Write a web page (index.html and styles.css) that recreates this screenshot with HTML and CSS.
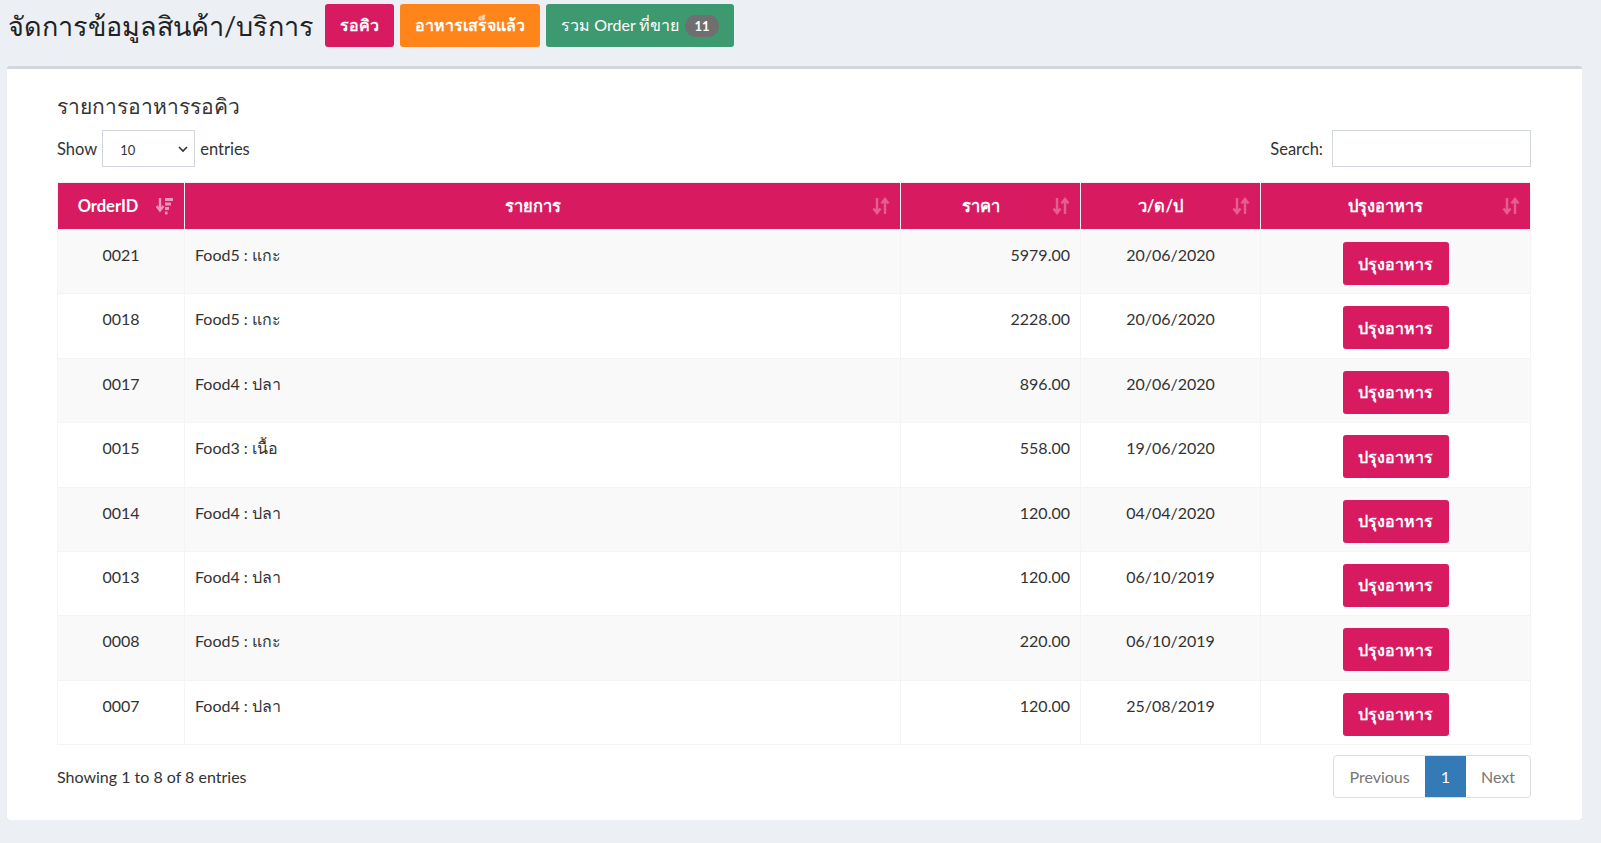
FILE: index.html
```html
<!DOCTYPE html>
<html lang="th">
<head>
<meta charset="utf-8">
<title>จัดการข้อมูลสินค้า/บริการ</title>
<link rel="stylesheet" href="styles.css">
</head>
<body>
<div class="top">
  <h1 class="page-title">จัดการข้อมูลสินค้า/บริการ</h1>
  <a class="btn btn-maroon">รอคิว</a>
  <a class="btn btn-orange">อาหารเสร็จแล้ว</a>
  <a class="btn btn-olive">รวม Order ที่ขาย <span class="badge">11</span></a>
</div>

<div class="card">
  <h3 class="card-title">รายการอาหารรอคิว</h3>
  <div class="controls">
    <label class="length">Show
      <span class="select">10
        <svg width="10" height="7" viewBox="0 0 10 7"><path d="M1 1l4 4 4-4" fill="none" stroke="#333" stroke-width="1.6"/></svg>
      </span>
      entries</label>
    <label class="search">Search: <span class="input"></span></label>
  </div>

  <table class="grid">
    <thead>
      <tr>
        <th class="c-id">OrderID
          <svg class="sort sort-on" width="18" height="18" viewBox="0 0 18 18"><path d="M4 1v11M0.5 9l3.5 4.5 3.5-4.5" fill="none" stroke="currentColor" stroke-width="2.4"/><rect x="9" y="1" width="8" height="3" fill="currentColor"/><rect x="9" y="5.5" width="6" height="3" fill="currentColor"/><rect x="9" y="10" width="4" height="3" fill="currentColor"/><rect x="9" y="14.5" width="2.5" height="3" fill="currentColor"/></svg>
        </th>
        <th class="c-name">รายการ<svg class="sort" width="18" height="18" viewBox="0 0 18 18"><path d="M5 1v14M1.5 11.5l3.5 4.5 3.5-4.5M13 17V3M9.5 6.5L13 2l3.5 4.5" fill="none" stroke="currentColor" stroke-width="2.4"/></svg></th>
        <th class="c-price">ราคา<svg class="sort" width="18" height="18" viewBox="0 0 18 18"><path d="M5 1v14M1.5 11.5l3.5 4.5 3.5-4.5M13 17V3M9.5 6.5L13 2l3.5 4.5" fill="none" stroke="currentColor" stroke-width="2.4"/></svg></th>
        <th class="c-date">ว/ด/ป<svg class="sort" width="18" height="18" viewBox="0 0 18 18"><path d="M5 1v14M1.5 11.5l3.5 4.5 3.5-4.5M13 17V3M9.5 6.5L13 2l3.5 4.5" fill="none" stroke="currentColor" stroke-width="2.4"/></svg></th>
        <th class="c-act">ปรุงอาหาร<svg class="sort" width="18" height="18" viewBox="0 0 18 18"><path d="M5 1v14M1.5 11.5l3.5 4.5 3.5-4.5M13 17V3M9.5 6.5L13 2l3.5 4.5" fill="none" stroke="currentColor" stroke-width="2.4"/></svg></th>
      </tr>
    </thead>
    <tbody>
      <tr><td class="c-id">0021</td><td>Food5 : แกะ</td><td class="c-price">5979.00</td><td class="c-date">20/06/2020</td><td class="c-act"><a class="btn btn-maroon btn-cook">ปรุงอาหาร</a></td></tr>
      <tr><td class="c-id">0018</td><td>Food5 : แกะ</td><td class="c-price">2228.00</td><td class="c-date">20/06/2020</td><td class="c-act"><a class="btn btn-maroon btn-cook">ปรุงอาหาร</a></td></tr>
      <tr><td class="c-id">0017</td><td>Food4 : ปลา</td><td class="c-price">896.00</td><td class="c-date">20/06/2020</td><td class="c-act"><a class="btn btn-maroon btn-cook">ปรุงอาหาร</a></td></tr>
      <tr><td class="c-id">0015</td><td>Food3 : เนื้อ</td><td class="c-price">558.00</td><td class="c-date">19/06/2020</td><td class="c-act"><a class="btn btn-maroon btn-cook">ปรุงอาหาร</a></td></tr>
      <tr><td class="c-id">0014</td><td>Food4 : ปลา</td><td class="c-price">120.00</td><td class="c-date">04/04/2020</td><td class="c-act"><a class="btn btn-maroon btn-cook">ปรุงอาหาร</a></td></tr>
      <tr><td class="c-id">0013</td><td>Food4 : ปลา</td><td class="c-price">120.00</td><td class="c-date">06/10/2019</td><td class="c-act"><a class="btn btn-maroon btn-cook">ปรุงอาหาร</a></td></tr>
      <tr><td class="c-id">0008</td><td>Food5 : แกะ</td><td class="c-price">220.00</td><td class="c-date">06/10/2019</td><td class="c-act"><a class="btn btn-maroon btn-cook">ปรุงอาหาร</a></td></tr>
      <tr><td class="c-id">0007</td><td>Food4 : ปลา</td><td class="c-price">120.00</td><td class="c-date">25/08/2019</td><td class="c-act"><a class="btn btn-maroon btn-cook">ปรุงอาหาร</a></td></tr>
    </tbody>
  </table>

  <div class="footer">
    <div class="info">Showing 1 to 8 of 8 entries</div>
    <div class="pager">
      <a class="pg pg-prev">Previous</a>
      <a class="pg pg-cur">1</a>
      <a class="pg pg-next">Next</a>
    </div>
  </div>
</div>
</body>
</html>
```

FILE: styles.css
```css
* { box-sizing: border-box; }
body {
  margin: 0;
  background: #ecf0f5;
  font-family: "Lato", "Noto Sans", sans-serif;
  color: #333;
  font-size: 16px;
}
.top {
  display: flex;
  align-items: center;
  gap: 6px;
  padding: 4px 8px 0 8px;
  height: 47px;
}
.page-title {
  margin: 0 5px 0 0;
  font-size: 27px;
  font-weight: 400;
  color: #222;
  line-height: 43px;
}
.btn {
  display: inline-flex;
  align-items: center;
  justify-content: center;
  height: 43px;
  padding: 0 15px;
  border-radius: 3px;
  color: #fff;
  font-weight: 700;
  font-size: 16px;
  text-decoration: none;
}
.btn-maroon { background: #d81b60; }
.btn-orange { background: #ff851b; }
.btn-olive { background: #3d9970; font-weight: 400; }
.badge {
  display: inline-block;
  margin-left: 6px;
  background: #6f6f6f;
  color: #fff;
  border-radius: 11px;
  font-size: 13px;
  font-weight: 700;
  padding: 4px 9px;
  line-height: 14px;
}
.card {
  margin: 19px 19px 0 7px;
  background: #fff;
  border-top: 3px solid #d2d6de;
  border-radius: 3px;
  box-shadow: 0 1px 1px rgba(0,0,0,0.1);
  padding: 22px 51px 22px 50px;
}
.card-title {
  margin: 0;
  font-size: 21px;
  font-weight: 400;
  line-height: 30px;
  color: #333;
}
.controls {
  display: flex;
  justify-content: space-between;
  align-items: center;
  margin-top: 9px;
}
.length, .search {
  display: flex;
  align-items: center;
  gap: 5px;
  font-size: 16.5px;
}
.select {
  display: inline-flex;
  align-items: center;
  justify-content: space-between;
  width: 93px;
  height: 37px;
  border: 1px solid #d2d6de;
  padding: 2px 6px 0 17px;
  font-size: 13px;
}
.input {
  display: inline-block;
  width: 199px;
  height: 37px;
  border: 1px solid #d2d6de;
  margin-left: 4px;
}
.grid {
  width: 100%;
  margin-top: 15px;
  border-collapse: collapse;
  border: 1px solid #f4f4f4;
}
.grid th {
  position: relative;
  background: #d81b60;
  color: #fff;
  font-weight: 700;
  height: 47px;
  padding: 0 30px 0 10px;
  border-left: 1px solid #f4f4f4;
  font-size: 16.5px;
  text-align: center;
}
.grid th:first-child { border-left: none; }
.grid th.c-id { padding-left: 4px; }
.sort {
  position: absolute;
  right: 10px;
  top: 14px;
  color: rgba(255,255,255,0.3);
}
.sort-on { color: rgba(255,255,255,0.55); }
.c-id { width: 127px; }
.c-name { width: 716px; }
.c-price { width: 180px; }
.c-date { width: 180px; }
.grid td {
  padding: 15px 10px 0 10px;
  vertical-align: top;
  line-height: 20px;
  border-left: 1px solid #f4f4f4;
  border-top: 1px solid #f4f4f4;
  height: 64.4px;
}
.grid tbody tr:nth-child(odd) td { background: #f9f9f9; }
.grid td.c-id { text-align: center; }
.grid td.c-price { text-align: right; }
.grid td.c-date { text-align: center; }
.grid td.c-act { text-align: center; padding-top: 12px; }
.btn-cook {
  width: 106px;
  height: 43px;
  padding: 0;
}
.footer {
  display: flex;
  justify-content: space-between;
  align-items: center;
  margin-top: 10px;
}
.info { font-size: 16px; }
.pager {
  display: flex;
  border: 1px solid #ddd;
  border-radius: 4px;
  height: 43px;
  overflow: hidden;
}
.pg {
  display: flex;
  align-items: center;
  padding: 0 15px;
  color: #777;
  font-size: 16px;
}
.pg-cur {
  background: #337ab7;
  color: #fff;
  padding: 0 16px;
}
```
